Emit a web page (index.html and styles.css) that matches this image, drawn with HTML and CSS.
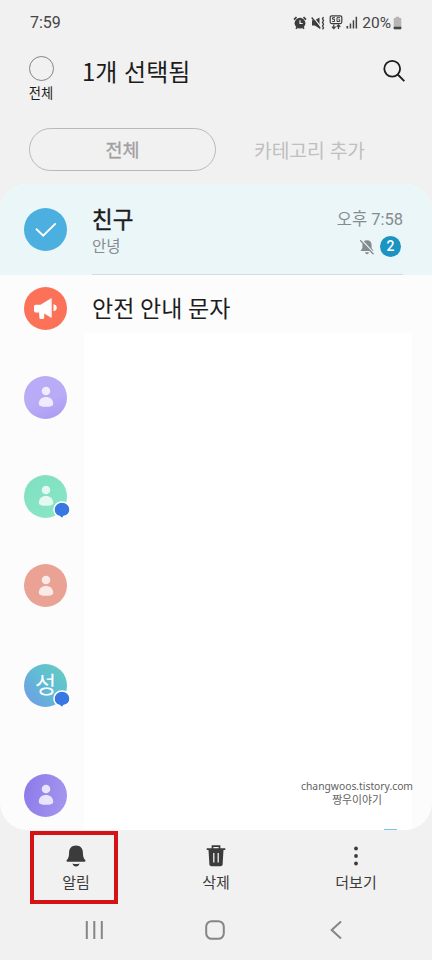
FILE: index.html
```html
<!DOCTYPE html>
<html lang="ko">
<head>
<meta charset="utf-8">
<meta name="viewport" content="width=device-width, initial-scale=1">
<title>메시지</title>
<link rel="stylesheet" href="styles.css">
</head>
<body>
<svg class="defs" width="0" height="0" aria-hidden="true">
  <symbol id="person" viewBox="0 0 16 22"><circle cx="8" cy="5" r="4.3"/><path d="M.8 18c0-4.800 3-7 7.200-7s7.200 2.200 7.200 7c0 1.900-2.700 2.800-7.200 2.800S.8 19.900.8 18z"/></symbol>
</svg>
<div class="phone">
  <div class="status">
    <span class="clock">7:59</span>
    <div class="indicators">
      <svg class="alarm" width="14" height="14" viewBox="0 0 14 14"><path d="M1 3.600 3.500 1.200M13 3.600 10.500 1.200M3 12.800l1.200-1.500M11 12.800l-1.200-1.500" stroke="#3c3c3c" stroke-width="1.700"/><circle cx="7" cy="7.200" r="5.400" fill="#3c3c3c"/><path d="M7 4.300v3.200h2.700" stroke="#f2f2f2" stroke-width="1.200" fill="none"/></svg>
      <svg class="mute" width="14" height="14" viewBox="0 0 14 14"><path d="M1 4.300h2.800L8.500 1.500v11L3.800 9.500H1z" fill="#3c3c3c"/><path d="m2 .8 7.500 9.500" stroke="#f2f2f2" stroke-width="1.200"/><path d="m.7 1.500 8.600 11" stroke="#3c3c3c" stroke-width="1.300"/><path d="m12.500 1-1 1.800 1 1.800-1 1.800 1 1.800-1 1.800 1 1.800-1 1.500" fill="none" stroke="#3c3c3c" stroke-width="1.300"/></svg>
      <svg class="fiveg" width="14" height="15" viewBox="0 0 14 15"><rect x="1.200" y=".8" width="11.600" height="7.800" rx="1.500" fill="none" stroke="#3c3c3c" stroke-width="1.200"/><path d="M6 2.700H3.500v1.600h2v2.200h-2.300M11 2.700H8v3.800h2.700V4.700H9.500" fill="none" stroke="#3c3c3c"/><path d="M4.800 9.500v4M3 11.700l1.800 2 1.800-2M9.500 14v-4M7.700 11.800l1.800-2 1.800 2" fill="none" stroke="#3c3c3c" stroke-width="1.200"/></svg>
      <svg class="signal" width="12" height="13" viewBox="0 0 12 13" fill="#444"><path d="M.5 10h1.700v2.500H.5zM3.700 7.500h1.500v5H3.700zM6.700 4.200h1.500v8.300H6.700zM9.600.8h1.500v11.700H9.600z"/></svg>
      <span class="percent">20%</span>
      <svg class="battery" width="9" height="14" viewBox="0 0 9 14"><path d="M2.700 2V.7h3.600V2h1Q8.300 2 8.300 3v9.500q0 .8-.8.800h-6q-.8 0-.8-.8V3q0-1 1-1z" fill="#b5b5b5"/><path d="M.7 10.700h7.600v1.800q0 .8-.8.800h-6q-.8 0-.8-.8z" fill="#444"/></svg>
    </div>
  </div>
  <header class="header">
    <div class="select-all"><span class="radio"></span><span>전체</span></div>
    <h1 class="title">1개 선택됨</h1>
    <svg class="search" width="22" height="22" viewBox="0 0 22 22" fill="none" stroke="#1c1c1c" stroke-width="1.800"><circle cx="9.200" cy="8.800" r="7.900"/><path d="m14.700 14.500 6.600 6.600"/></svg>
  </header>
  <nav class="tabs"><span class="tab tab-active">전체</span><span class="tab">카테고리 추가</span></nav>
  <main class="list">
    <div class="row row-selected">
      <div class="avatar blue"><svg width="43" height="43" viewBox="0 0 43 43" fill="none" stroke="#fff" stroke-width="2"><path d="m12 20.800 7.200 6.900 12.500-12.300"/></svg></div>
      <div class="message">
        <div class="texts"><span class="name friend">친구</span><span class="preview">안녕</span></div>
        <div class="meta">
          <span class="time">오후 7:58</span>
          <div class="flags">
            <svg width="16" height="16" viewBox="0 0 16 16"><path d="M8 1.200c2.900 0 4.600 2 4.600 4.800V9l1.900 3H1.500l1.900-3V6C3.400 3.200 5.100 1.200 8 1.200zM6 13.200h4q-.5 2-2 2t-2-2z" fill="#858b8f"/><path d="m2.300.8 13 14" stroke="#edf6f9" stroke-width="1.600"/><path d="m1.200 1.200 13.300 14" stroke="#858b8f" stroke-width="1.300"/></svg>
            <span class="count">2</span>
          </div>
        </div>
      </div>
    </div>
    <div class="row row-alert">
      <div class="avatar coral"><svg width="43" height="43" viewBox="0 0 43 43" fill="#fff"><path d="M10 19.500q0-1.700 1.700-1.700h4.800l10.300-6.200v18.800l-6.600-4v4.200q0 1.300-1.200 1.300h-2.300q-1.200 0-1.300-1.200l-.3-5.200h-3.400Q10 25.500 10 23.800zM29.500 17.300q3.300.8 3.300 3.500t-3.300 3.500z"/><path d="M26.500 11.600h1.200v19h-1.200z"/></svg></div>
      <span class="name">안전 안내 문자</span>
    </div>
    <div class="row row-three"><div class="avatar lavender"><svg class="person"><use href="#person"/></svg></div></div>
    <div class="row row-four"><div class="avatar mint"><svg class="person"><use href="#person"/></svg><svg class="chat" viewBox="0 0 18 18"><path d="M9 1C4.500 1 1 4.200 1 8.500c0 3.600 2.400 6.200 5.400 7l2.800 2.300 1.500-2.200C14.500 14.900 17 12.100 17 8.500 17 4.200 13.500 1 9 1z"/></svg></div></div>
    <div class="row row-five"><div class="avatar salmon"><svg class="person"><use href="#person"/></svg></div></div>
    <div class="row row-six"><div class="avatar sky"><span class="initial">성</span><svg class="chat" viewBox="0 0 18 18"><path d="M9 1C4.500 1 1 4.200 1 8.500c0 3.600 2.400 6.200 5.400 7l2.800 2.300 1.500-2.200C14.500 14.900 17 12.100 17 8.500 17 4.200 13.500 1 9 1z"/></svg></div></div>
    <div class="row row-seven"><div class="avatar violet"><svg class="person"><use href="#person"/></svg></div></div>
    <div class="blank"></div>
    <div class="credit"><span class="site">changwoos.tistory.com</span><span>짱우이야기</span></div>
    <span class="peek"></span>
  </main>
  <nav class="actions">
    <div class="action highlighted"><svg width="20" height="22" viewBox="0 0 20 22" fill="#3b3b3b"><path d="M10 .5c4.300 0 6.900 2.800 6.900 7 0 4 .7 5.600 2.300 7.600.6.800.3 1.700-.8 1.700H1.600c-1.100 0-1.400-.9-.8-1.700 1.600-2 2.300-3.600 2.300-7.600 0-4.200 2.600-7 6.900-7zM6.500 18.500q3.500 1.100 7 0-.7 2.900-3.500 2.900t-3.500-2.900z"/></svg><span>알림</span></div>
    <div class="action"><svg width="20" height="22" viewBox="0 0 20 22"><path d="M.7 4.200h18.600M6.500 4V1.200h7V4" fill="none" stroke="#3b3b3b" stroke-width="1.700"/><path d="M2.500 5h15l-.9 14.200q-.2 2-2 2H5.400q-1.800 0-2-2z" fill="#3b3b3b"/><path d="M7.800 8v9.500M12.200 8v9.500" stroke="#f1f1f1" stroke-width="1.300"/></svg><span>삭제</span></div>
    <div class="action"><svg width="20" height="22" viewBox="0 0 20 22" fill="#3b3b3b"><circle cx="10" cy="3.500" r="1.900"/><circle cx="10" cy="11" r="1.900"/><circle cx="10" cy="18.500" r="1.900"/></svg><span>더보기</span></div>
  </nav>
  <nav class="system">
    <svg width="20" height="20" viewBox="0 0 20 20"><path d="M2.800 1v18M10.300 1v18M17.800 1v18" stroke="#858585" stroke-width="2"/></svg>
    <svg width="20" height="20" viewBox="0 0 20 20"><rect x="1.200" y="1.200" width="17.600" height="17.600" rx="5.500" fill="none" stroke="#858585" stroke-width="2"/></svg>
    <svg width="20" height="20" viewBox="0 0 20 20"><path d="m15 1.500-9.300 8.500 9.300 8.500" fill="none" stroke="#858585" stroke-width="2"/></svg>
  </nav>
</div>
</body>
</html>
```
FILE: styles.css
```css
* { box-sizing: border-box; }
body { margin: 0; background: #f1f1f1; font-family: Roboto, "Noto Sans CJK KR", sans-serif; color: #1c1c1c; }
svg { display: block; flex: none; }
.defs { position: absolute; }
.phone { width: 432px; height: 960px; display: flex; flex-direction: column; overflow: hidden; }
.status { height: 44px; padding: 1px 29px 0 30px; display: flex; align-items: center; justify-content: space-between; color: #454545; line-height: 20px; }
.clock { font-size: 16px; }
.indicators { display: flex; align-items: center; margin-right: 1px; }
.mute, .fiveg { margin-left: 4px; }
.signal { margin-left: 3px; }
.percent { margin-left: 4px; font-size: 15.500px; }
.battery { margin-left: 2px; }
.header { height: 84px; padding: 0 27px 0 28px; display: flex; }
.select-all { width: 26px; padding-top: 12px; display: flex; flex-direction: column; align-items: center; font-size: 13.300px; line-height: 20px; white-space: nowrap; }
.radio { width: 25px; height: 25px; margin-bottom: 3px; border: 1px solid #858585; border-radius: 50%; flex: none; }
.title { margin: 9px 0 0 28px; font: 400 24px/36px "Noto Sans CJK KR", sans-serif; white-space: nowrap; }
.search { margin: 16px 0 0 auto; }
.tabs { height: 56px; padding-left: 29px; display: flex; }
.tab { width: 187px; height: 43px; padding-top: 2px; line-height: 43px; text-align: center; font-size: 19.300px; color: #bfbfbf; }
.tab-active { border: 1px solid #b9b9b9; border-radius: 22px; line-height: 41px; font-size: 18.500px; color: #a0a0a0; -webkit-text-stroke: .3px #a0a0a0; }
.list { position: relative; height: 646px; flex: none; overflow: hidden; border-radius: 27px; background: #fcfcfc; }
.row { display: flex; align-items: center; padding-left: 24px; }
.row-selected { height: 91px; background: #ebf6f9; }
.row-alert { height: 66px; }
.row-three { height: 112px; }
.row-four { height: 86px; }
.row-five { height: 93px; }
.row-six { height: 106px; }
.row-seven { height: 114px; }
.avatar { position: relative; width: 43px; height: 43px; flex: none; border-radius: 50%; display: flex; align-items: center; justify-content: center; }
.blue { background: #4bafe0; }
.coral { background: #fc7259; }
.lavender { background: linear-gradient(160deg, #b9abf6 55%, #a999f2); }
.mint { background: linear-gradient(150deg, #7fdfc1, #8ae7c5); }
.salmon { background: #eaa295; }
.sky { background: linear-gradient(50deg, #6e9fe6 10%, #5fbed2 55%, #67cdc1); }
.violet { background: linear-gradient(100deg, #8c7ae8, #a597ef); }
.person { width: 16px; height: 22px; fill: #fff; opacity: .78; }
.chat { position: absolute; left: 29px; top: 26px; width: 18px; height: 18px; overflow: visible; fill: #3977e3; stroke: #fff; stroke-width: 1.500px; }
.initial { color: #fff; font-size: 23px; line-height: 30px; padding-top: 1px; }
.message { width: 311px; height: 91px; margin-left: 25px; display: flex; justify-content: space-between; border-bottom: 1px solid #d4dcdf; }
.texts { display: flex; flex-direction: column; padding-top: 20px; }
.name { font-size: 23px; line-height: 32px; white-space: nowrap; }
.row-alert .name { margin: 3px 0 0 25px; }
.friend { font-size: 22.500px; -webkit-text-stroke: .4px #1c1c1c; }
.preview { font-size: 15.500px; line-height: 22px; color: #858b8f; }
.meta { display: flex; flex-direction: column; align-items: flex-end; padding-top: 25px; }
.time { font-size: 16.500px; line-height: 22px; color: #858b8f; white-space: nowrap; }
.flags { display: flex; align-items: center; gap: 5px; margin: 5px 2px 0 0; }
.count { width: 21px; height: 21px; border-radius: 50%; background: #1b94c4; color: #fff; font-size: 14px; font-weight: 500; line-height: 21px; text-align: center; }
.blank { position: absolute; left: 84px; top: 149px; width: 328px; height: 497px; background: #fff; }
.credit { position: absolute; right: 19px; bottom: 23px; display: flex; flex-direction: column; align-items: center; font: 10.800px/14px "Noto Sans", "Noto Sans CJK KR", sans-serif; color: #626262; }
.site { font-size: 10.300px; }
.peek { position: absolute; left: 384px; bottom: 0; width: 13px; height: 1px; background: #78c8e8; }
.actions { height: 75px; flex: none; display: flex; }
.action { width: 140px; padding-top: 15px; display: flex; flex-direction: column; align-items: center; font-size: 15px; line-height: 20px; color: #3b3b3b; }
.action span { margin-top: 6px; }
.highlighted { width: 88px; height: 73px; margin: 1px 28px 0 30px; padding: 10px 0 0 4px; border: 4px solid #d51317; }
.system { height: 55px; flex: none; padding: 0 86px 6px 84px; display: flex; align-items: center; justify-content: space-between; }
```
